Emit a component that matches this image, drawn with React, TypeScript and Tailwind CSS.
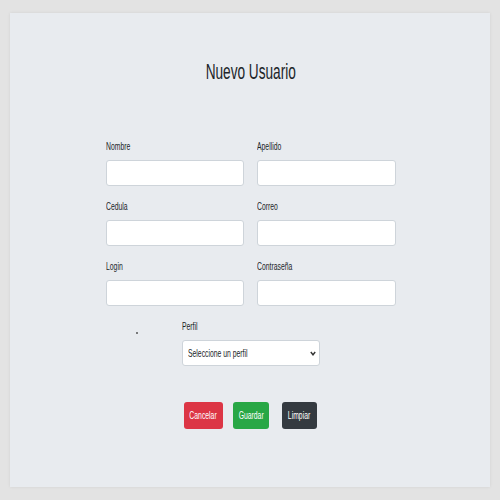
const Narrow = ({ children, center = false }: { children: React.ReactNode; center?: boolean }) => (
  <span className={`inline-block whitespace-nowrap scale-x-[0.62] ${center ? "origin-center" : "origin-left"}`}>
    {children}
  </span>
);

const Field = ({ label }: { label: string }) => (
  <div className="flex flex-col">
    <div className="text-[11px] leading-[11px] text-[#212529]">
      <Narrow>{label}</Narrow>
    </div>
    <input
      type="text"
      className="mt-[8px] h-[26px] w-full rounded-[3px] border border-[#ced4da] bg-white outline-none"
    />
  </div>
);

const fields = ["Nombre", "Apellido", "Cedula", "Correo", "Login", "Contraseña"];

const buttons = [
  { label: "Cancelar", className: "w-[39px] bg-[#dc3545]" },
  { label: "Guardar", className: "ml-[10px] w-[36px] bg-[#28a745]" },
  { label: "Limpiar", className: "ml-[13px] w-[35px] bg-[#343a40]" },
];

export default function App() {
  return (
    <div className="h-[500px] w-[500px] bg-[#e3e3e3] px-[10px] pt-[13px] font-['Liberation_Sans',Arial,sans-serif]">
      <div className="h-[474px] w-[480px] bg-[#e8ebef] pt-[48px] shadow-[0_0_3px_rgba(0,0,0,0.08)]">
        <h1 className="pl-[2px] text-center text-[22px] leading-[22px] text-[#212529]">
          <Narrow center>Nuevo Usuario</Narrow>
        </h1>

        <form className="ml-[96px] mt-[58px] w-[290px]">
          <div className="grid grid-cols-[138px_139px] gap-x-[13px] gap-y-[15px]">
            {fields.map((f) => (
              <Field key={f} label={f} />
            ))}
          </div>

          <div className="mt-[15px] flex items-start">
            <div className="ml-[30px] mt-[11px] h-[2px] w-[2px] rounded-full bg-[#555]" />
            <div className="ml-[44px] w-[138px]">
              <div className="text-[11px] leading-[11px] text-[#212529]">
                <Narrow>Perfil</Narrow>
              </div>
              <div className="mt-[8px] flex h-[26px] items-center justify-between rounded-[3px] border border-[#ced4da] bg-white pl-[5px] pr-[3px] text-[11px] text-[#212529]">
                <Narrow>Seleccione un perfil</Narrow>
                <svg width="6" height="5" viewBox="0 0 6 5" fill="none">
                  <path d="M0.8 1 L3 3.8 L5.2 1" stroke="#333" strokeWidth="1.4" />
                </svg>
              </div>
            </div>
          </div>

          <div className="mt-[36px] flex pl-[78px]">
            {buttons.map((b) => (
              <button
                key={b.label}
                type="button"
                className={`flex h-[27px] items-center justify-center rounded-[3px] text-[11px] text-white ${b.className}`}
              >
                <Narrow center>{b.label}</Narrow>
              </button>
            ))}
          </div>
        </form>
      </div>
    </div>
  );
}
